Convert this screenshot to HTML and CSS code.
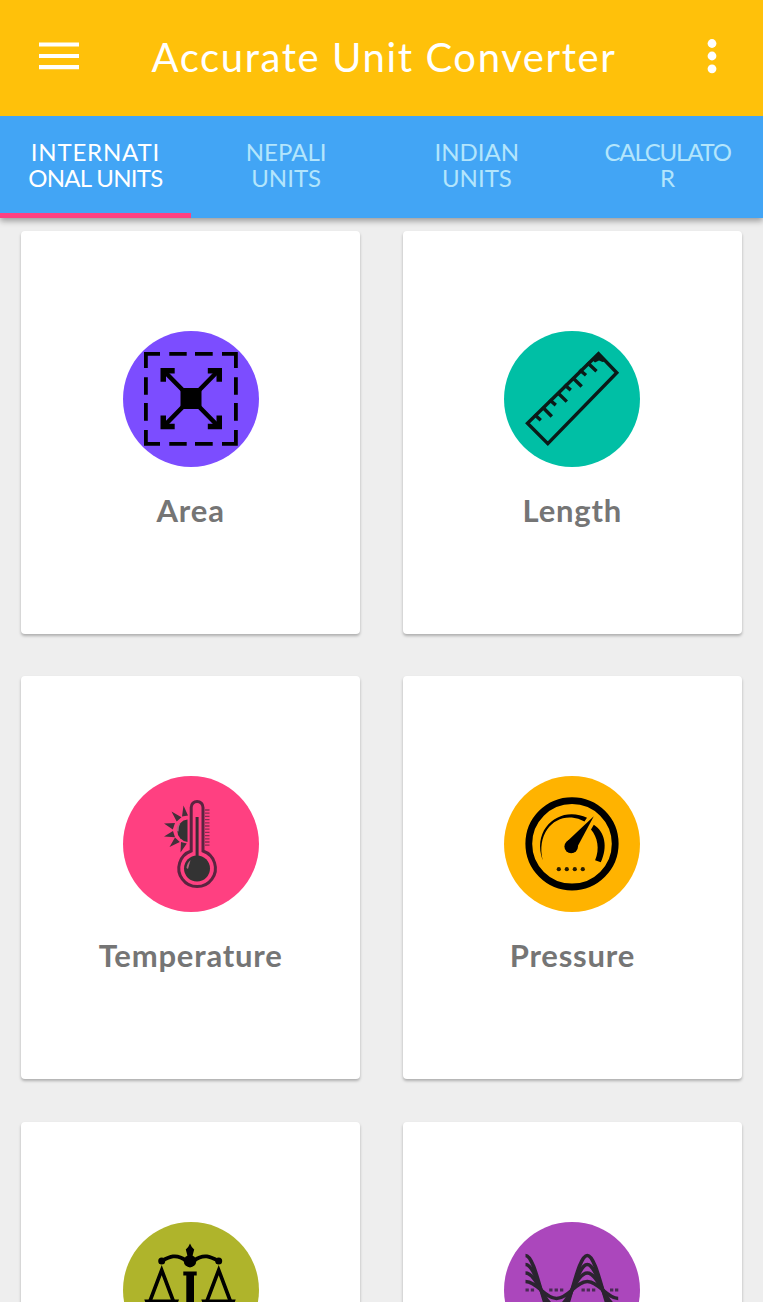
FILE: index.html
```html
<!DOCTYPE html>
<html lang="en">
<head>
    <meta charset="UTF-8">
    <meta name="viewport" content="width=device-width, initial-scale=1.0">
    <title>Accurate Unit Converter</title>
    <link rel="stylesheet" href="styles.css">
</head>
<body>
    <header class="app-bar">
        <svg class="menu-icon" viewBox="0 0 40 28">
            <path d="M0 2.5h40M0 14h40M0 25.2h40" stroke="#fff" stroke-width="4.2"/>
        </svg>
        <h1>Accurate Unit Converter</h1>
        <svg class="more-icon" viewBox="0 0 10 36">
            <g fill="#fff"><circle cx="5" cy="5.5" r="4.4"/><circle cx="5" cy="18" r="4.4"/><circle cx="5" cy="30.8" r="4.4"/></g>
        </svg>
    </header>

    <nav class="tabs">
        <a class="tab active"><span class="wide">INTERNATI</span><span class="narrow">ONAL UNITS</span></a>
        <a class="tab"><span>NEPALI</span><span>UNITS</span></a>
        <a class="tab"><span>INDIAN</span><span>UNITS</span></a>
        <a class="tab"><span class="narrower">CALCULATO</span><span>R</span></a>
    </nav>

    <main class="grid">
        <div class="card">
            <svg class="icon area" viewBox="0 0 136 136">
                <g fill="none" stroke="#000" stroke-width="3.8">
                    <path d="M22.9 37V22.9H37M99 22.9h13.9V37M112.9 99v13.9H99M37 112.9H22.9V99"/>
                    <path d="M46.3 22.9h17.4M72 22.9h17.7M46.3 112.9h17.4M72 112.9h17.7M22.9 46.3v17.4M22.9 72v17.7M112.9 46.3v17.4M112.9 72v17.7"/>
                    <path d="M40 39l56 57M96 39l-56 57" stroke-width="4.6"/>
                </g>
                <path d="M37.5 37h14.2v5.5H43v8.3h-5.5zM99 37H84.8v5.5h8.7v8.3H99zM37.5 98.3h14.2v-5.5H43v-8.3h-5.5zM99 98.3H84.8v-5.5h8.7v-8.3H99z"/>
                <rect x="57.5" y="57" width="21" height="21" rx="3"/>
            </svg>
            <h3 class="name">Area</h3>
        </div>

        <div class="card">
            <svg class="icon length" viewBox="0 0 136 136">
                <g fill="none" stroke="#0b1a18" stroke-width="3.4">
                    <path d="M23.5 92.3l20.3 20.4 69-71-18.3-19z"/>
                    <path d="M38.5 76l9.3 9.5M53.5 61.5l9.3 9.1M68.5 46.5l9.2 9M83.3 31.5l9.2 8.8"/>
                    <path d="M30.5 83.5l6.3 5.7M45.5 68.7l6.3 5.4M60.5 53.7l6.3 5.4M75.5 38.7l6.5 5.5"/>
                </g>
                <path d="M87.5 28.5l7-6.5 8 8-4 1-3.5-1.5-4 2z" fill="#0b1a18"/>
            </svg>
            <h3 class="name">Length</h3>
        </div>

        <div class="card">
            <svg class="icon temperature" viewBox="0 0 136 136">
                <path d="M68.2 75V31.4a5.9 6 0 0 1 11.8 0v43.6a18.3 18.3 0 1 1-11.8 0z" fill="none" stroke="#5b2440" stroke-width="3"/>
                <path d="M74.1 41v42" stroke="#3c2c36" stroke-width="3"/>
                <circle cx="74" cy="92.5" r="13" fill="#333"/>
                <path d="M63.5 92q.5-5 4-8-1 4-2.5 9z" fill="#b5657f"/>
                <path d="M82 34h4.5M82 37.2h4.5M82 40.4h4.5M82 43.6h4.5M82 46.8h4.5M82 50h4.5M82 53.2h4.5M82 56.4h4.5M82 59.6h4.5M82 62.8h4.5M82 66h4.5M82 69.2h4.5" stroke="#8a2c52" stroke-width="1.3"/>
                <path d="M64.5 43.5a11.3 11.3 0 0 0 0 22.5z" fill="#333"/>
                <path d="M53.5 55q0-6 4-8.5-2 4-2 9z" fill="#b5657f"/>
                <path d="M60.5 29.5l4.5 10-6 1zM48.5 35.5l10 5.7-4.8 4.2zM41 47.5l11-.5-2.2 6.5zM41 60.5l9-5.5 2 6.2zM46.5 71l5.5-9.5 4.8 4.5zM57.5 76.5l.5-10.5 5.8 1.5z" fill="#43303a"/>
            </svg>
            <h3 class="name">Temperature</h3>
        </div>

        <div class="card">
            <svg class="icon pressure" viewBox="0 0 136 136">
                <circle cx="68" cy="67.8" r="43.2" fill="none" stroke="#000" stroke-width="6.8"/>
                <path d="M38.8 84.5C29 57 48 38 67.8 38.2q8 0 15.2 3.6l-2.5 3.8Q74.5 42 67.8 41.6C49 40 32.5 58 38.8 84.5z"/>
                <path d="M89.8 48.8C101 56 104 71 96.8 86.3l-5.7-2C96 73 93.5 61 87 53.5z"/>
                <path d="M89.8 40.2L73 71.5 63 65.5z"/>
                <circle cx="67.2" cy="70.5" r="6.8"/>
                <g fill="#2a1d00"><circle cx="54.8" cy="93.2" r="2.1"/><circle cx="62.8" cy="93.2" r="2.1"/><circle cx="70.8" cy="93.2" r="2.1"/><circle cx="78.8" cy="93.2" r="2.1"/></g>
            </svg>
            <h3 class="name">Pressure</h3>
        </div>

        <!-- Weight -->
        <div class="card">
            <svg class="icon weight" viewBox="0 0 136 136">
                <path d="M67 21.5q1 3 4.2 6-1 4-2.2 8h-4q-1.2-4-2.2-8 3.2-3 4.2-6z"/>
                <circle cx="67" cy="39.2" r="6.2"/>
                <circle cx="38.7" cy="39" r="3.5"/>
                <circle cx="95.7" cy="39" r="3.5"/>
                <path d="M38.7 39C46 35 53 31 63 38.5M95.7 39C88 35 81 31 71 38.5" fill="none" stroke="#000" stroke-width="3.8"/>
                <path d="M27 79l11.7-31L50.3 79M84 79l11.7-31L107.3 79" fill="none" stroke="#000" stroke-width="3.6"/>
                <path d="M21.3 77.5H56q-3 11-17.3 11t-17.4-11zM78.3 77.5h34.4q-3 11-17.2 11t-17.2-11z"/>
                <path d="M60.3 49.5h13.4v4H71V108h12v5H51v-5h12.3V53.5h-3z"/>
            </svg>
        </div>

        <!-- Frequency -->
        <div class="card">
            <svg class="icon frequency" viewBox="0 0 136 136">
                <g fill="none" stroke="#2b2430" stroke-width="3.5">
                    <path d="M21.5 33.5C33 33.5 41 102 52.5 102S72 33.5 83.3 33.5 103 102 114.2 102"/>
                    <path d="M21.5 42.5C33 42.5 41 93.5 52.5 93.5S72 42.5 83.3 42.5 103 93.5 114.2 93.5"/>
                    <path d="M21.5 51C33 51 41 85 52.5 85S72 51 83.3 51 103 85 114.2 85"/>
                    <path d="M21.5 59.5C33 59.5 41 76.5 52.5 76.5S72 59.5 83.3 59.5 103 76.5 114.2 76.5"/>
                </g>
                <path d="M21.5 68h3.3M26.8 68h3.3M45.2 68h3.3M50.6 68h3.3M56 68h3.3M77.5 68h3.3M82.7 68h3.3M88 68h3.3M106 68h3.3M111 68h3.3" stroke="#4a2a55" stroke-width="3"/>
            </svg>
        </div>
    </main>
</body>
</html>
```
FILE: styles.css
```css
* {
    box-sizing: border-box;
}
body {
    display: flex;
    flex-direction: column;
    height: 100vh;
    margin: 0;
    overflow: hidden;
    background-color: #eeeeee;
    font-family: Lato, sans-serif;
}
.app-bar {
    display: flex;
    flex-shrink: 0;
    align-items: center;
    height: 116px;
    padding: 0 46px 4px 39px;
    background-color: #ffc10a;
    color: white;
}
.menu-icon {
    width: 40px;
    height: 28px;
}
.more-icon {
    width: 10px;
    height: 36px;
}
h1 {
    flex: 1;
    margin: 0;
    padding: 2px 18px 0 0;
    font-size: 40px;
    font-weight: 400;
    line-height: 48px;
    letter-spacing: 1.6px;
    text-align: center;
    white-space: nowrap;
}
.tabs {
    display: grid;
    flex-shrink: 0;
    grid-template-columns: repeat(4, 1fr);
    height: 102px;
    background-color: #42a5f5;
    box-shadow: 0 3px 6px rgba(0, 0, 0, 0.35);
    clip-path: inset(0 0 -12px 0);
}
.tab {
    display: flex;
    flex-direction: column;
    align-items: center;
    padding-top: 23px;
    border-bottom: 5px solid transparent;
    color: #b3e5fc;
    font-size: 24px;
    line-height: 26px;
}
.tab.active {
    color: white;
    border-bottom-color: #ff4081;
}
.wide {
    letter-spacing: 0.8px;
}
.narrow {
    letter-spacing: -0.7px;
}
.narrower {
    letter-spacing: -1.2px;
}
.grid {
    display: grid;
    flex: 1;
    grid-template-columns: 1fr 1fr;
    grid-auto-rows: 403px;
    gap: 42.5px;
    min-height: 0;
    padding: 12.8px 21px 0;
    overflow: hidden;
}
.card {
    display: flex;
    flex-direction: column;
    align-items: center;
    padding-top: 100.2px;
    background-color: white;
    border-radius: 4px;
    box-shadow: 0 2px 3px rgba(0, 0, 0, 0.27);
}
.icon {
    flex-shrink: 0;
    width: 136px;
    height: 136px;
    border-radius: 50%;
}
.area {
    background-color: #7c4dff;
}
.length {
    background-color: #00bfa5;
}
.temperature {
    background-color: #ff4081;
}
.pressure {
    background-color: #ffb300;
}
.weight {
    background-color: #afb42b;
}
.frequency {
    background-color: #ab47bc;
}
.name {
    margin: 23px 0 0;
    color: #757575;
    font-size: 31px;
    font-weight: 700;
    line-height: 40px;
    letter-spacing: 0.8px;
}
```
